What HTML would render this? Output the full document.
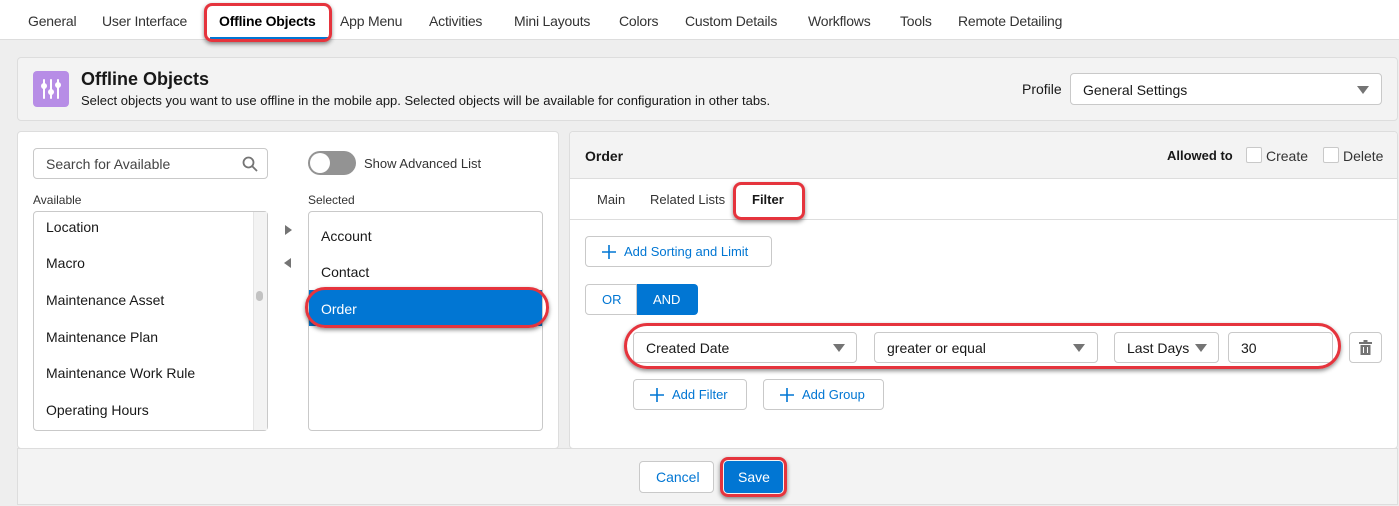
<!DOCTYPE html><html><head><style>
*{box-sizing:border-box;margin:0;padding:0}
body{width:1399px;height:506px;background:#eeeeee;font-family:"Liberation Sans",sans-serif;font-size:14px;color:#181818;position:relative;overflow:hidden}
.a{position:absolute}
.tab{position:absolute;top:13px;font-size:14px;color:#333;letter-spacing:-0.2px}
.red{position:absolute;border:3px solid #e5343d;border-radius:8px;box-shadow:0 2px 4px rgba(0,0,0,.45)}
.box{position:absolute;border:1px solid #c9c9c9;border-radius:4px;background:#fff}
.btn{position:absolute;border:1px solid #c9c9c9;border-radius:4px;background:#fff;color:#0176d3;font-size:13px;display:flex;align-items:center}
.btn svg{margin:0 8px 0 16px}
.li{position:absolute;left:46px;font-size:14px}
.tri{position:absolute;width:0;height:0;border-left:6px solid transparent;border-right:6px solid transparent;border-top:8px solid #747474}
</style></head><body>
<div class="a" style="left:0;top:0;width:1399px;height:40px;background:#fff;border-bottom:1px solid #ddd"></div>
<div class="tab" style="left:28px">General</div>
<div class="tab" style="left:102px">User Interface</div>
<div class="tab" style="left:219px;font-weight:bold;color:#000">Offline Objects</div>
<div class="a" style="left:210px;top:37px;width:118px;height:3px;background:#0176d3"></div>
<div class="red" style="left:204px;top:3px;width:128px;height:39px"></div>
<div class="tab" style="left:340px">App Menu</div>
<div class="tab" style="left:429px">Activities</div>
<div class="tab" style="left:514px">Mini Layouts</div>
<div class="tab" style="left:619px">Colors</div>
<div class="tab" style="left:685px">Custom Details</div>
<div class="tab" style="left:808px">Workflows</div>
<div class="tab" style="left:900px">Tools</div>
<div class="tab" style="left:958px">Remote Detailing</div>

<div class="a" style="left:17px;top:57px;width:1381px;height:64px;background:#f3f3f3;border:1px solid #ddd;border-radius:4px"></div>
<div class="a" style="left:33px;top:71px;width:36px;height:36px;background:#b78de6;border-radius:4px">
<svg width="36" height="36"><g stroke="#fff" stroke-width="2" stroke-linecap="round"><line x1="11" y1="9" x2="11" y2="27"/><line x1="18" y1="9" x2="18" y2="27"/><line x1="25" y1="9" x2="25" y2="27"/></g><g fill="#fff"><circle cx="11" cy="15" r="3"/><circle cx="18" cy="21" r="3"/><circle cx="25" cy="14" r="3"/></g></svg></div>
<div class="a" style="left:81px;top:69px;font-size:18px;font-weight:bold">Offline Objects</div>
<div class="a" style="left:81px;top:93px;font-size:13px">Select objects you want to use offline in the mobile app. Selected objects will be available for configuration in other tabs.</div>
<div class="a" style="left:1022px;top:81px">Profile</div>
<div class="box" style="left:1070px;top:73px;width:312px;height:32px"><span class="a" style="left:12px;top:8px">General Settings</span></div>
<div class="tri" style="left:1357px;top:86px"></div>

<div class="a" style="left:17px;top:131px;width:542px;height:318px;background:#fff;border:1px solid #ddd;border-radius:4px"></div>
<div class="box" style="left:33px;top:148px;width:235px;height:31px"><span class="a" style="left:12px;top:7px;color:#444">Search for Available</span>
<svg class="a" style="left:208px;top:7px" width="16" height="16"><circle cx="6.5" cy="6.5" r="5" fill="none" stroke="#747474" stroke-width="1.8"/><line x1="10" y1="10" x2="15" y2="15" stroke="#747474" stroke-width="1.8"/></svg></div>
<div class="a" style="left:308px;top:151px;width:48px;height:24px;background:#939393;border-radius:12px"></div>
<div class="a" style="left:310px;top:153px;width:20px;height:20px;background:#fff;border-radius:50%"></div>
<div class="a" style="left:364px;top:156px;font-size:13px;color:#333">Show Advanced List</div>
<div class="a" style="left:33px;top:193px;font-size:12px;color:#333">Available</div>
<div class="a" style="left:308px;top:193px;font-size:12px;color:#333">Selected</div>
<div class="box" style="left:33px;top:211px;width:235px;height:220px;overflow:hidden"></div>
<div class="a" style="left:253px;top:212px;width:14px;height:218px;background:#f3f3f3;border-left:1px solid #e5e5e5"></div>
<div class="a" style="left:256px;top:291px;width:7px;height:10px;background:#c2c2c2;border-radius:4px"></div>
<div class="li" style="top:219px">Location</div>
<div class="li" style="top:255px">Macro</div>
<div class="li" style="top:292px">Maintenance Asset</div>
<div class="li" style="top:329px">Maintenance Plan</div>
<div class="li" style="top:365px">Maintenance Work Rule</div>
<div class="li" style="top:402px">Operating Hours</div>
<div class="a" style="left:285px;top:225px;border-top:5px solid transparent;border-bottom:5px solid transparent;border-left:7px solid #747474"></div>
<div class="a" style="left:284px;top:258px;border-top:5px solid transparent;border-bottom:5px solid transparent;border-right:7px solid #747474"></div>
<div class="box" style="left:308px;top:211px;width:235px;height:220px"></div>
<div class="li" style="left:321px;top:228px">Account</div>
<div class="li" style="left:321px;top:264px">Contact</div>
<div class="a" style="left:309px;top:290px;width:233px;height:36px;background:#0176d3"></div>
<div class="li" style="left:321px;top:301px;color:#fff">Order</div>
<div class="red" style="left:305px;top:287px;width:244px;height:41px;border-radius:20px"></div>

<div class="a" style="left:569px;top:131px;width:829px;height:318px;background:#fff;border:1px solid #ddd;border-radius:4px;overflow:hidden">
<div class="a" style="left:0;top:0;width:829px;height:47px;background:#f3f3f3;border-bottom:1px solid #ddd"></div>
<div class="a" style="left:0;top:87px;width:829px;height:1px;background:#ddd"></div>
</div>
<div class="a" style="left:585px;top:148px;font-weight:bold">Order</div>
<div class="a" style="left:1167px;top:148px;font-weight:bold;font-size:13px">Allowed to</div>
<div class="box" style="left:1246px;top:147px;width:16px;height:16px;border-radius:2px"></div>
<div class="a" style="left:1266px;top:148px;color:#333">Create</div>
<div class="box" style="left:1323px;top:147px;width:16px;height:16px;border-radius:2px"></div>
<div class="a" style="left:1343px;top:148px;color:#333">Delete</div>
<div class="a" style="left:597px;top:192px;color:#333;font-size:13px">Main</div>
<div class="a" style="left:650px;top:192px;color:#333;font-size:13px">Related Lists</div>
<div class="a" style="left:752px;top:192px;font-weight:bold;font-size:13px">Filter</div>
<div class="red" style="left:733px;top:182px;width:72px;height:38px"></div>

<div class="btn" style="left:585px;top:236px;width:187px;height:31px"><svg width="14" height="14"><path d="M7 0V14M0 7H14" stroke="#0176d3" stroke-width="1.6"/></svg>Add Sorting and Limit</div>
<div class="btn" style="left:585px;top:284px;width:52px;height:31px;padding-left:16px;border-radius:4px 0 0 4px">OR</div>
<div class="a" style="left:637px;top:284px;width:61px;height:31px;background:#0176d3;border-radius:0 4px 4px 0;color:#fff;font-size:13px;padding:8px 0 0 16px">AND</div>

<div class="box" style="left:633px;top:332px;width:224px;height:31px"><span class="a" style="left:12px;top:7px">Created Date</span></div>
<div class="tri" style="left:833px;top:344px"></div>
<div class="box" style="left:874px;top:332px;width:224px;height:31px"><span class="a" style="left:12px;top:7px">greater or equal</span></div>
<div class="tri" style="left:1073px;top:344px"></div>
<div class="box" style="left:1114px;top:332px;width:105px;height:31px"><span class="a" style="left:12px;top:7px">Last Days</span></div>
<div class="tri" style="left:1195px;top:344px"></div>
<div class="box" style="left:1228px;top:332px;width:105px;height:31px"><span class="a" style="left:12px;top:7px">30</span></div>
<div class="red" style="left:624px;top:323px;width:717px;height:46px;border-radius:23px"></div>
<div class="box" style="left:1349px;top:332px;width:33px;height:31px"></div>
<svg class="a" style="left:1359px;top:340px" width="13" height="15"><rect x="0" y="2" width="13" height="2" fill="#747474"/><rect x="4.5" y="0" width="4" height="2" fill="#747474"/><rect x="1.5" y="5" width="10" height="10" fill="#747474"/><g stroke="#fff" stroke-width="1"><line x1="4.5" y1="7" x2="4.5" y2="13"/><line x1="8.5" y1="7" x2="8.5" y2="13"/></g></svg>
<div class="btn" style="left:633px;top:379px;width:114px;height:31px"><svg width="14" height="14"><path d="M7 0V14M0 7H14" stroke="#0176d3" stroke-width="1.6"/></svg>Add Filter</div>
<div class="btn" style="left:763px;top:379px;width:121px;height:31px"><svg width="14" height="14"><path d="M7 0V14M0 7H14" stroke="#0176d3" stroke-width="1.6"/></svg>Add Group</div>

<div class="a" style="left:17px;top:448px;width:1381px;height:57px;background:#f3f3f3;border:1px solid #ddd"></div>
<div class="btn" style="left:639px;top:461px;width:75px;height:32px;padding-left:16px;font-size:14px">Cancel</div>
<div class="a" style="left:724px;top:461px;width:59px;height:32px;background:#0176d3;border-radius:4px;color:#fff;padding:8px 0 0 14px">Save</div>
<div class="red" style="left:720px;top:457px;width:67px;height:40px"></div>
</body></html>
